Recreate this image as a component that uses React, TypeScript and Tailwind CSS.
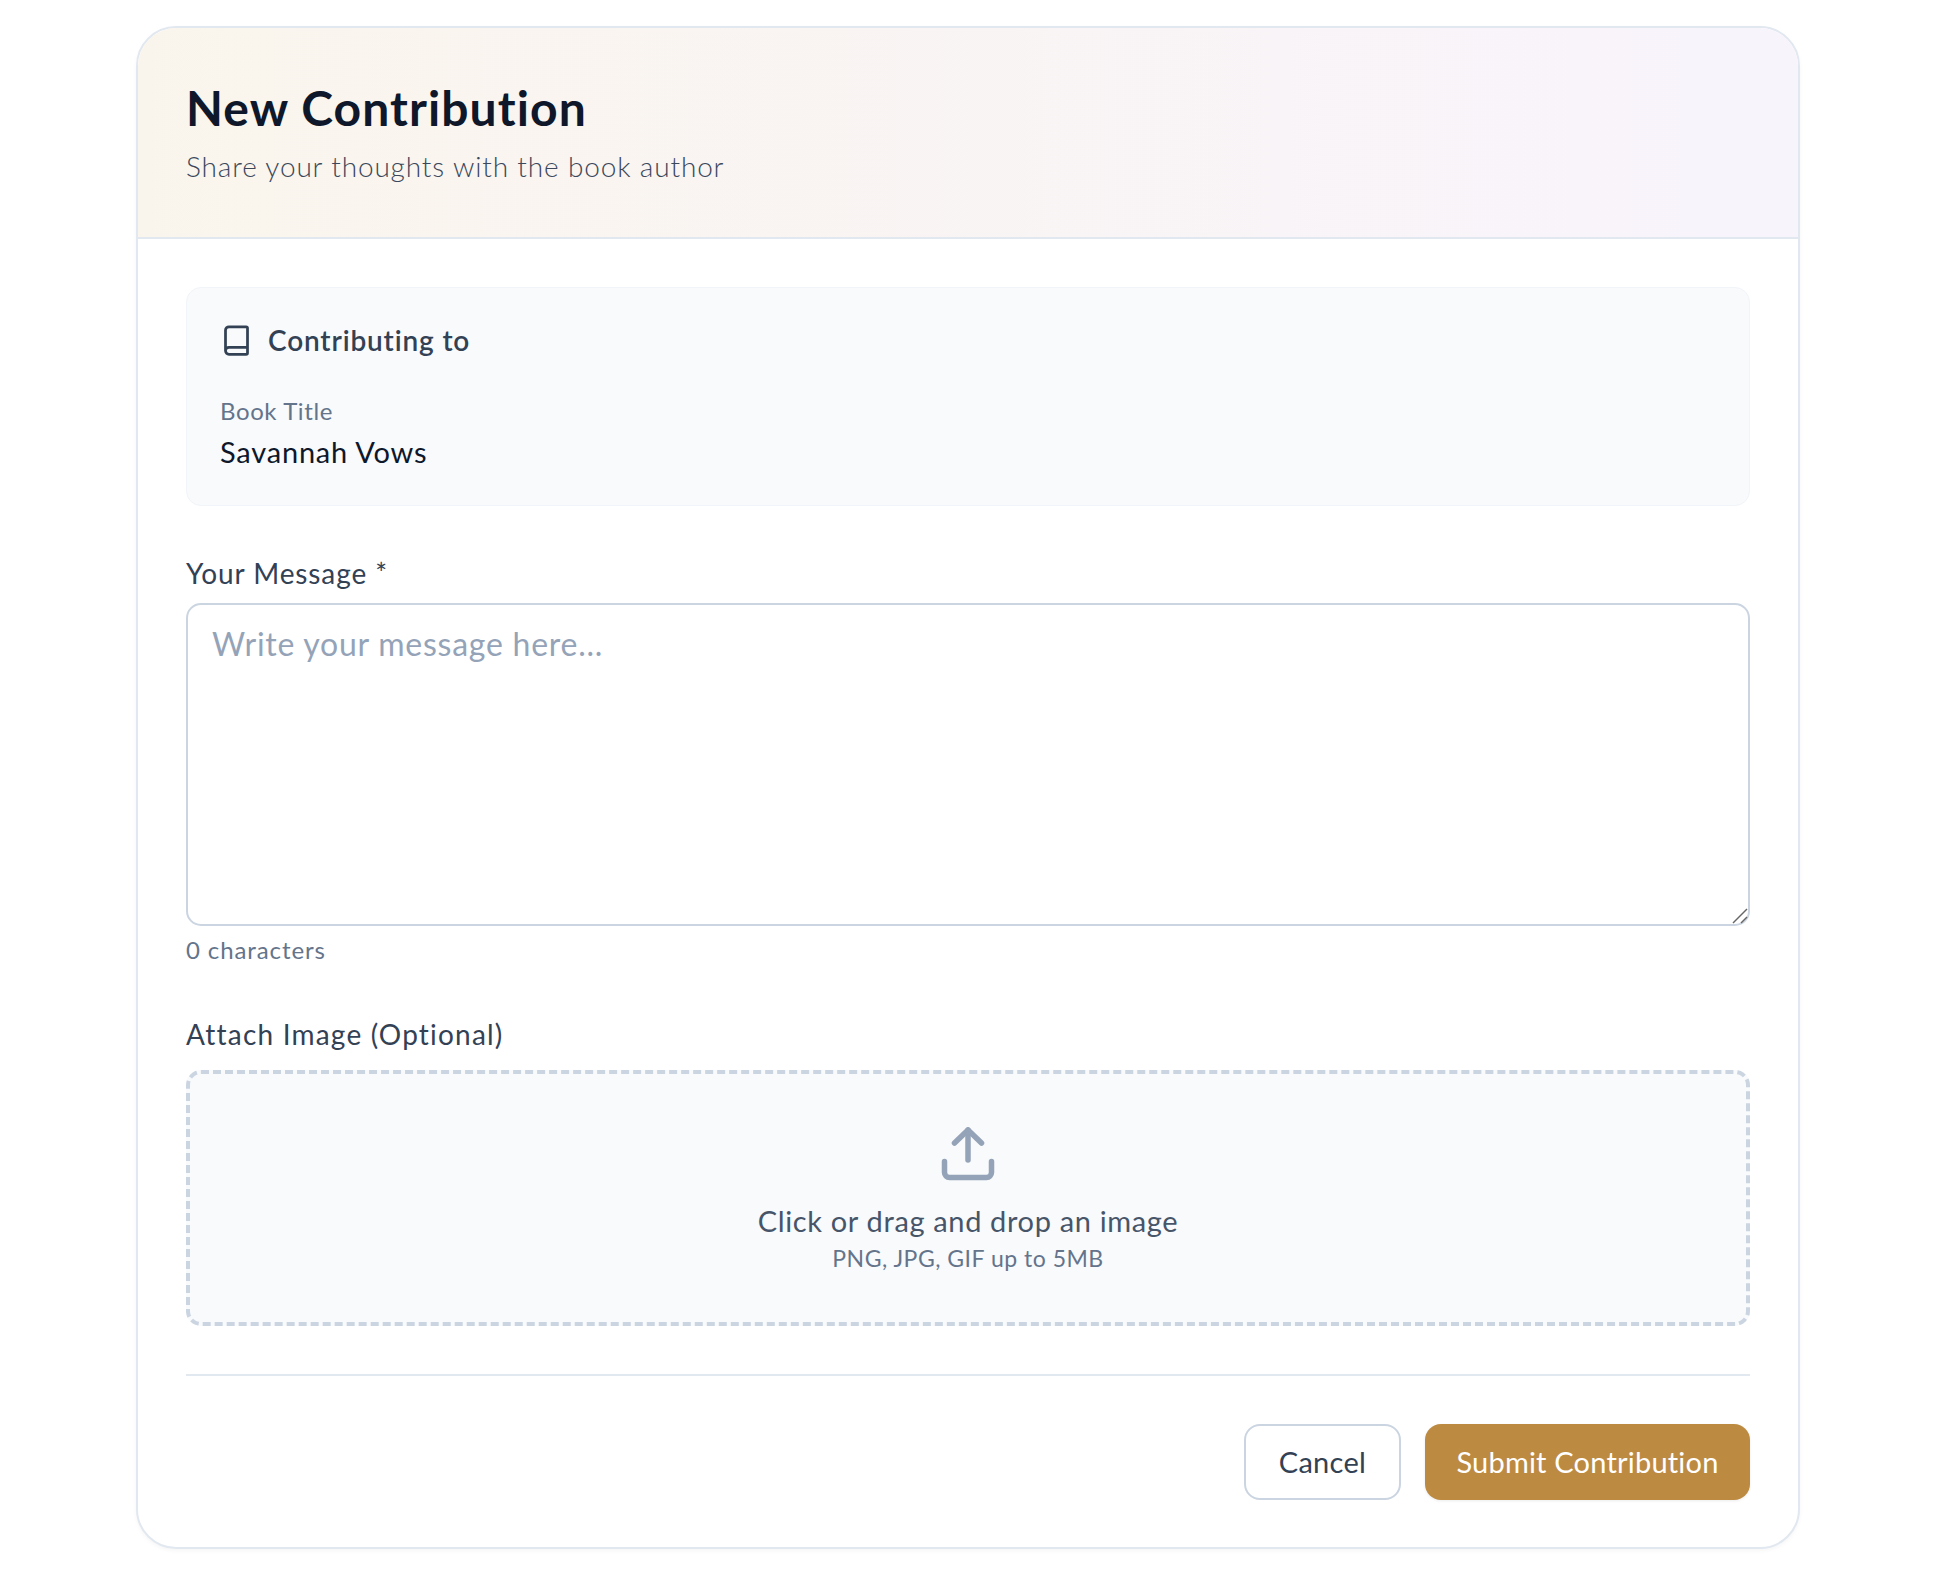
export default function App() {
  return (
    <div className="min-h-[1596px] bg-white pt-[26px] pl-[136px] w-[1958px] font-['Lato','Liberation_Sans',sans-serif]">
      <div className="w-[1664px] h-[1523px] rounded-[40px] border-2 border-[#e2e8f0] bg-white overflow-hidden shadow-[0_2px_4px_rgba(15,23,42,0.04)]">
        <div className="h-[211px] border-b-2 border-[#e2e8f0] bg-gradient-to-r from-[#faf5ec] to-[#f8f4fc] pl-[48px] pt-[52px]">
          <h1 className="text-[#0f172a] text-[48px] leading-[56px] font-bold tracking-[1.1px]">New Contribution</h1>
          <p className="text-[#3b485c] text-[28px] leading-[38px] mt-[11px] tracking-[0.85px] font-light">Share your thoughts with the book author</p>
        </div>
        <div className="px-[48px] pt-[48px]">
          <div className="h-[219px] rounded-[15px] border border-[#f1f5f9] bg-[#f8fafc] pl-[33px] pt-[34px]">
            <div className="flex items-center gap-[15px] h-[36px]">
              <svg width="33" height="33" viewBox="0 0 24 24" fill="none" stroke="#334155" strokeWidth="2" strokeLinecap="round" strokeLinejoin="round">
                <path d="M4 19.5v-15A2.5 2.5 0 0 1 6.5 2H19a1 1 0 0 1 1 1v18a1 1 0 0 1-1 1H6.5a1 1 0 0 1 0-5H20" />
              </svg>
              <span className="text-[#334155] text-[28px] font-semibold tracking-[0.85px]">Contributing to</span>
            </div>
            <div className="text-[#64748b] text-[24px] leading-[32px] mt-[37px] tracking-[0.6px]">Book Title</div>
            <div className="text-[#0f172a] text-[29px] leading-[36px] mt-[7px] tracking-[0.8px]">Savannah Vows</div>
          </div>
          <div className="text-[#334155] text-[28px] leading-[36px] mt-[49px] tracking-[0.9px]">Your Message *</div>
          <div className="relative mt-[12px]">
            <textarea
              placeholder="Write your message here..."
              className="block w-full h-[323px] rounded-[15px] border-2 border-[#cbd5e1] bg-white px-[24px] py-[18px] text-[32px] leading-[42px] tracking-[0.75px] outline-none resize-none placeholder:text-[#94a3b8]"
            />
            <svg className="absolute right-[2px] bottom-[2px] pointer-events-none" width="16" height="16" viewBox="0 0 16 16" fill="none" stroke="#666666" strokeWidth="1.5">
              <path d="M1 15 15 1" />
              <path d="M9 15l6-6" />
            </svg>
          </div>
          <div className="text-[#64748b] text-[24px] leading-[32px] mt-[8px] tracking-[0.9px]">0 characters</div>
          <div className="text-[#334155] text-[28px] leading-[36px] mt-[50px] tracking-[1.2px]">Attach Image (Optional)</div>
          <div className="h-[256px] mt-[18px] rounded-[15px] border-[4px] border-dashed border-[#cbd5e1] bg-[#f8fafc] flex flex-col items-center pt-[49px]">
            <svg width="60" height="60" viewBox="0 0 60 60" fill="none" stroke="#94a3b8" strokeWidth="5.5" strokeLinecap="round" strokeLinejoin="round">
              <path d="M30 7v30" />
              <path d="M16.5 20 30 7l13.5 13" />
              <path d="M6.5 38.5v11a5 5 0 0 0 5 5h37a5 5 0 0 0 5-5v-11" />
            </svg>
            <div className="text-[#475569] text-[29px] leading-[38px] mt-[19px] tracking-[0.65px]">Click or drag and drop an image</div>
            <div className="text-[#64748b] text-[23px] leading-[32px] mt-[2px] tracking-[0.5px]">PNG, JPG, GIF up to 5MB</div>
          </div>
          <div className="h-[2px] bg-[#e2e8f0] mt-[48px]" />
          <div className="flex justify-end gap-[24px] mt-[48px]">
            <button className="w-[157px] h-[76px] rounded-[16px] border-2 border-[#cbd5e1] bg-white text-[#334155] text-[29px] tracking-[0.3px]">Cancel</button>
            <button className="w-[325px] h-[76px] rounded-[16px] bg-[#bd8a42] text-white text-[29px] tracking-[0.2px] shadow-[0_1px_3px_rgba(0,0,0,0.08)]">Submit Contribution</button>
          </div>
        </div>
      </div>
    </div>
  );
}
